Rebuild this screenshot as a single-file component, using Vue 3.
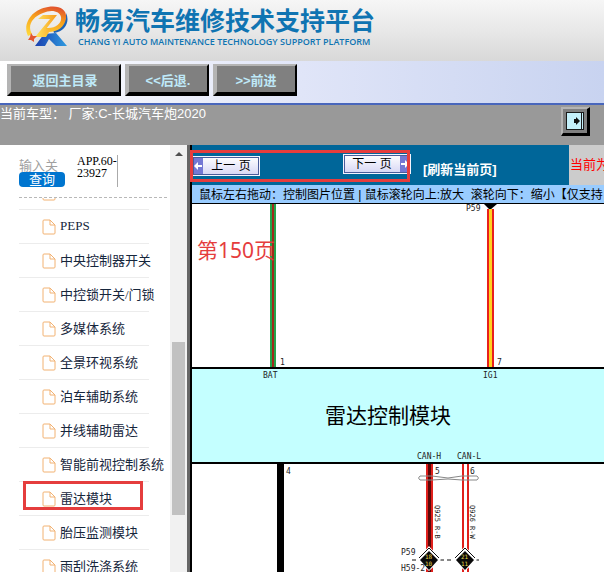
<template>
  <div class="page">
    <header class="banner">
      <svg class="logo" viewBox="0 0 44 42" aria-hidden="true">
        <defs>
          <linearGradient id="ring" x1="0.6" y1="0" x2="0.3" y2="1">
            <stop offset="0" stop-color="#e2552c" />
            <stop offset="0.4" stop-color="#f7a01c" />
            <stop offset="1" stop-color="#ffd83a" />
          </linearGradient>
          <linearGradient id="bolt" x1="0" y1="0" x2="1" y2="0">
            <stop offset="0" stop-color="#ffe860" />
            <stop offset="1" stop-color="#f79a1c" />
          </linearGradient>
          <linearGradient id="leg" x1="0" y1="0" x2="1" y2="0">
            <stop offset="0" stop-color="#1b3fae" />
            <stop offset="1" stop-color="#2f9be0" />
          </linearGradient>
        </defs>
        <path d="M20 28 L11 40 L21 40 L25 33 L32 40 L43 40 L32 27 Z" fill="url(#leg)" />
        <path d="M30 27 C42 25 46 15 42 7 C42 17 38 22 29 24 Z" fill="#1c63b8" />
        <path
          d="M4 30 C-2 18 8 3 24 1 C36 -1 43 4 42 12 C41 21 33 26 25 26 L22 31 L16 31 L22 22 C32 23 38 17 37 11 C36 5 27 3 19 7 C8 11 3 20 8 28 Z"
          fill="url(#ring)"
        />
        <path d="M14 13 L19 9 H33 L22 23 H27 L20 31 H11 L26 13 Z" fill="url(#bolt)" />
        <path d="M7 27 L9 30 L13 30 L10 33 L10 36 L7 34 L4 34 L6 31 Z" fill="#e4572e" />
      </svg>
      <div class="brand">
        <h1>畅易汽车维修技术支持平台</h1>
        <p>CHANG YI AUTO MAINTENANCE TECHNOLOGY SUPPORT PLATFORM</p>
      </div>
    </header>

    <div class="toolbar">
      <button type="button" class="tool wide">返回主目录</button>
      <button type="button" class="tool">&lt;&lt;后退.</button>
      <button type="button" class="tool">&gt;&gt;前进</button>
    </div>

    <div class="status">
      <span>当前车型： 厂家:C-长城汽车炮2020</span>
      <button type="button" class="toggle" aria-label="展开">
        <svg viewBox="0 0 18 18" aria-hidden="true">
          <rect x="0" y="0" width="18" height="18" fill="#1a1a1a" />
          <rect x="1" y="1" width="14" height="16" fill="#c4f0fa" />
          <rect x="16" y="1" width="1" height="16" fill="#c4f0fa" />
          <path d="M8 7 H10 V5 L14 9 L10 13 V11 H8 Z" fill="#111" />
        </svg>
      </button>
    </div>

    <main class="main">
      <aside class="side">
        <div class="tree">
          <form class="search" @submit.prevent>
            <div class="search-left">
              <input v-model="keyword" type="text" placeholder="输入关" aria-label="输入关键字" />
              <button type="submit">查询</button>
            </div>
            <div class="code">APP.60-<br />23927</div>
          </form>
          <div class="list-wrap">
            <ul>
              <li v-for="(item, index) in items" :key="index">
                <svg class="file" viewBox="0 0 14 16" aria-hidden="true">
                  <path d="M1 2 Q1 1 2 1 H8 L13 6 V14 Q13 15 12 15 H2 Q1 15 1 14 Z M8 1 V6 H13" />
                </svg>
                <a href="#" @click.prevent="active = item">{{ item }}</a>
                <span v-if="item === active" class="mark"></span>
              </li>
            </ul>
          </div>
        </div>
        <div class="scrollbar">
          <span class="up"></span>
          <span class="space"></span>
          <span class="thumb"></span>
          <span class="rest"></span>
        </div>
      </aside>

      <section class="viewer">
        <div class="top">
          <nav class="pager">
            <button type="button" class="turn prev">
              <svg viewBox="0 0 10 16" aria-hidden="true"><path d="M1 8 L5 4 V7 H9 V9 H5 V12 Z" /></svg>
              <span>上一 页</span>
            </button>
            <button type="button" class="turn next">
              <span>下一 页</span>
              <svg viewBox="0 0 10 16" aria-hidden="true"><path d="M9 8 L5 4 V7 H1 V9 H5 V12 Z" /></svg>
            </button>
            <a href="#" @click.prevent>[刷新当前页]</a>
            <span class="frame"></span>
          </nav>
          <div class="current">当前为</div>
        </div>
        <div class="hint">鼠标左右拖动：控制图片位置 | 鼠标滚轮向上:放大&nbsp; 滚轮向下：缩小【仅支持</div>
        <div class="canvas">
          <svg class="diagram" viewBox="0 0 412 368" preserveAspectRatio="xMinYMin slice">
            <!-- 电源线 -->
            <rect x="78" y="0" width="6" height="164" fill="#22a34a" />
            <rect x="80" y="0" width="2" height="164" fill="#a02a1c" />
            <path d="M292 0 H305 L298 6 Z" fill="#000" />
            <rect x="295" y="5" width="7" height="159" fill="#e8201c" />
            <rect x="297" y="5" width="3" height="159" fill="#ffd21e" />
            <!-- 模块 -->
            <rect x="-2" y="164" width="420" height="95" fill="#c4ffff" stroke="#000" stroke-width="2" />
            <text class="module" x="133" y="219">雷达控制模块</text>
            <!-- 接地和CAN线 -->
            <rect x="85" y="260" width="7" height="108" fill="#000" />
            <rect x="234" y="260" width="7" height="108" fill="#e0201c" />
            <rect x="236" y="260" width="3" height="108" fill="#5a0808" />
            <rect x="270" y="260" width="7" height="108" fill="#e0201c" />
            <rect x="272" y="260" width="3" height="108" fill="#fff" />
            <path
              d="M240 272 H228 Q225 274 228 276 H240 L256 275 L270 276 H285 Q288 274 285 272 H270 L256 274 Z"
              fill="none"
              stroke="#888"
            />
            <path d="M220 356 H290" stroke="#111" stroke-dasharray="4 3" />
            <g v-for="plug in plugs" :key="plug.x" :transform="`translate(${plug.x} 356)`">
              <path d="M-12 0 L0 -14 L12 0 L0 11 Z" fill="#fff" />
              <path d="M-10 -2 L0 -12 L10 -2" fill="none" stroke="#111" />
              <path d="M-9 0 L0 -9 L9 0 L0 10 Z" fill="#0a0a0a" />
              <text class="pin" x="-4" y="-1">{{ plug.upper }}</text>
              <text class="pin" x="-4" y="6">{{ plug.lower }}</text>
            </g>
            <text
              v-for="label in labels"
              :key="label.text + label.x"
              class="label"
              :x="label.x"
              :y="label.y"
            >{{ label.text }}</text>
            <text class="wire" transform="translate(243 301) rotate(90)">Q925 R-B</text>
            <text class="wire" transform="translate(278 301) rotate(90)">Q926 R-W</text>
          </svg>
          <div class="note">第150页</div>
        </div>
      </section>
    </main>
  </div>
</template>

<script setup>
  import { ref } from 'vue';

  const keyword = ref('');
  const active = ref('雷达模块');

  // 左侧系统列表
  const items = [
    '', 'PEPS', '中央控制器开关', '中控锁开关/门锁', '多媒体系统', '全景环视系统',
    '泊车辅助系统', '并线辅助雷达', '智能前视控制系统', '雷达模块', '胎压监测模块', '雨刮洗涤系统'
  ];

  // 插头
  const plugs = [
    { x: 237, upper: '18', lower: '10' },
    { x: 273, upper: '21', lower: '11' }
  ];

  // 电路图上的标注
  const labels = [
    { text: 'P59', x: 274, y: 7 },
    { text: '1', x: 88, y: 161 },
    { text: '7', x: 305, y: 161 },
    { text: 'BAT', x: 71, y: 174 },
    { text: 'IG1', x: 291, y: 174 },
    { text: 'CAN-H', x: 225, y: 255 },
    { text: 'CAN-L', x: 265, y: 255 },
    { text: '4', x: 94, y: 270 },
    { text: '5', x: 243, y: 270 },
    { text: '6', x: 278, y: 270 },
    { text: 'P59', x: 209, y: 351 },
    { text: 'H59-2', x: 209, y: 367 }
  ];
</script>

<style>
  body {
    margin: 0;
  }
</style>

<style scoped>
  .page {
    display: flex;
    flex-direction: column;
    height: 100vh;
    overflow: hidden;
    background: #fff;
    font-family: "Liberation Sans", "Noto Sans CJK SC", sans-serif;
    font-size: 13px;
  }
  button {
    font-family: inherit;
    padding: 0;
    cursor: pointer;
  }
  /* 顶部 */
  .banner {
    display: flex;
    gap: 7px;
    box-sizing: border-box;
    height: 61px;
    flex-shrink: 0;
    padding: 6px 24px;
    background: linear-gradient(#f6f6f6, #e8e8e8 50%, #d8d8d8);
  }
  .logo {
    width: 44px;
    height: 42px;
  }
  .brand {
    color: #0f74b2;
    white-space: nowrap;
  }
  h1 {
    margin: 0;
    font-size: 25px;
    line-height: 30px;
  }
  .brand p {
    margin: 0 3px;
    font-family: "Open Sans", "Liberation Sans", sans-serif;
    font-size: 9px;
    line-height: 12px;
    font-weight: 600;
  }
  .toolbar {
    display: flex;
    gap: 4px;
    padding: 3px 7px 7px;
    background: linear-gradient(90deg, #fff, #e0e5f8 50%, #c8d3f0);
    border-bottom: 2px solid #4866bc;
  }
  .tool {
    box-sizing: border-box;
    width: 84px;
    height: 32px;
    background: #808080;
    color: #bfe9f8;
    font-size: 13px;
    font-weight: bold;
    border-style: solid;
    border-width: 2px 2px 4px 4px;
    border-color: #b4b4b4 #000 #000 #b4b4b4;
  }
  .tool.wide {
    width: 114px;
  }
  .status {
    display: flex;
    justify-content: space-between;
    height: 40px;
    flex-shrink: 0;
    background: #999;
    color: #fff;
    line-height: 17px;
  }
  .toggle {
    display: flex;
    align-items: center;
    justify-content: center;
    box-sizing: border-box;
    width: 29px;
    height: 29px;
    margin: 2px 14px 0 0;
    background: #808080;
    border-style: solid;
    border-width: 2px 3px 3px 2px;
    border-color: #b4b4b4 #000 #000 #b4b4b4;
  }
  .toggle svg {
    width: 18px;
    height: 18px;
  }
  .main {
    display: flex;
    flex: 1;
    min-height: 0;
  }
  /* 左侧 */
  .side {
    display: flex;
    flex: 0 0 187px;
  }
  .tree {
    display: flex;
    flex-direction: column;
    flex: 1;
    min-width: 0;
    padding: 0 3px 0 19px;
  }
  .search {
    display: flex;
    gap: 12px;
    box-sizing: border-box;
    height: 53px;
    flex-shrink: 0;
    padding-top: 10px;
    border-bottom: 1px dashed #b8b8b8;
  }
  .search-left {
    display: flex;
    flex-direction: column;
    width: 46px;
  }
  .search input {
    box-sizing: border-box;
    height: 17px;
    width: 46px;
    padding: 4px 0 0;
    border: 0;
    font-family: inherit;
    font-size: 13px;
    outline: 0;
  }
  .search input::placeholder {
    color: #a0a0a0;
  }
  .search button {
    height: 15px;
    border: 0;
    border-radius: 4px;
    background: #0075cf;
    color: #fff;
    font-size: 13px;
    line-height: 15px;
  }
  .code {
    width: 40px;
    height: 32px;
    border-right: 1px solid #aaa;
    font-family: "Liberation Serif", serif;
    font-size: 12px;
    line-height: 12px;
  }
  .list-wrap {
    flex: 1;
    overflow: hidden;
  }
  ul {
    margin: -22px 0 0;
    padding: 0;
    list-style: none;
  }
  li {
    position: relative;
    display: flex;
    align-items: center;
    gap: 4px;
    box-sizing: border-box;
    width: 130px;
    height: 34px;
    padding-left: 23px;
    border-bottom: 1px solid #ececec;
    white-space: nowrap;
  }
  li a {
    padding-bottom: 2px;
    color: #16263c;
    text-decoration: none;
    font-family: "Liberation Serif", "Noto Sans CJK SC", serif;
  }
  .file {
    flex-shrink: 0;
    width: 14px;
    height: 16px;
    fill: none;
    stroke: #f2b273;
  }
  .mark {
    position: absolute;
    left: 4px;
    top: -1px;
    box-sizing: border-box;
    width: 120px;
    height: 29px;
    border: 3px solid #e53d3d;
  }
  .scrollbar {
    display: flex;
    flex-direction: column;
    width: 17px;
    background: #f1f1f1;
  }
  .up {
    width: 0;
    margin: 7px auto;
    border: 4px solid transparent;
    border-top: 0;
    border-bottom-color: #505050;
  }
  .space {
    flex: 179;
  }
  .thumb {
    flex: 173;
    margin: 0 2px;
    background: #c1c1c1;
  }
  .rest {
    flex: 57;
  }
  /* 右侧 */
  .viewer {
    display: flex;
    flex-direction: column;
    flex: 1;
    min-width: 0;
    border-left: 2px solid #000;
    box-shadow: -3px 0 #666;
    margin-left: 3px;
  }
  .top {
    display: flex;
    height: 40px;
    flex-shrink: 0;
    background: #ccc;
  }
  .pager {
    position: relative;
    display: flex;
    flex: 0 0 377px;
    background: #069;
  }
  .turn {
    display: flex;
    box-sizing: border-box;
    width: 68px;
    height: 20px;
    margin-top: 11px;
    background: linear-gradient(#fff, #d6d6f4);
    border: 1px solid #f4f4ff;
    outline: 1px solid #4a5c9a;
    outline-offset: -2px;
    font-size: 12px;
    line-height: 18px;
    color: #000;
  }
  .turn span {
    flex: 1;
    text-align: center;
  }
  .turn svg {
    width: 10px;
    height: 18px;
    background: #7478d4;
    fill: #fff;
  }
  .next {
    margin: 9px 12px 0 83px;
  }
  .pager a {
    margin-top: 15px;
    color: #fff;
    font-weight: bold;
    line-height: 20px;
    text-decoration: none;
    white-space: nowrap;
  }
  .frame {
    position: absolute;
    left: -2px;
    top: 5px;
    box-sizing: border-box;
    width: 220px;
    height: 32px;
    border: 3px solid #e53d3d;
  }
  .current {
    flex: 1;
    overflow: hidden;
    padding-left: 1px;
    color: #f00;
    line-height: 39px;
    white-space: nowrap;
  }
  .hint {
    height: 18px;
    flex-shrink: 0;
    overflow: hidden;
    padding-left: 7px;
    background: #9cf;
    border-bottom: 1px solid #000;
    color: #000;
    font-size: 12px;
    line-height: 20px;
    white-space: nowrap;
  }
  .canvas {
    position: relative;
    flex: 1;
    min-height: 0;
    overflow: hidden;
  }
  .diagram {
    display: block;
    width: 100%;
    height: 100%;
  }
  .module {
    font-size: 21px;
  }
  .label,
  .wire,
  .pin {
    font-family: "DejaVu Sans Mono", monospace;
    font-size: 8px;
    fill: #222;
  }
  .wire {
    font-size: 7px;
  }
  .pin {
    font-size: 6px;
    fill: #e8d84a;
  }
  .note {
    position: absolute;
    left: 5px;
    top: 31px;
    color: #e53d3d;
    font-family: "Noto Sans", "Noto Sans CJK SC", sans-serif;
    font-size: 21px;
    line-height: 30px;
  }
</style>
